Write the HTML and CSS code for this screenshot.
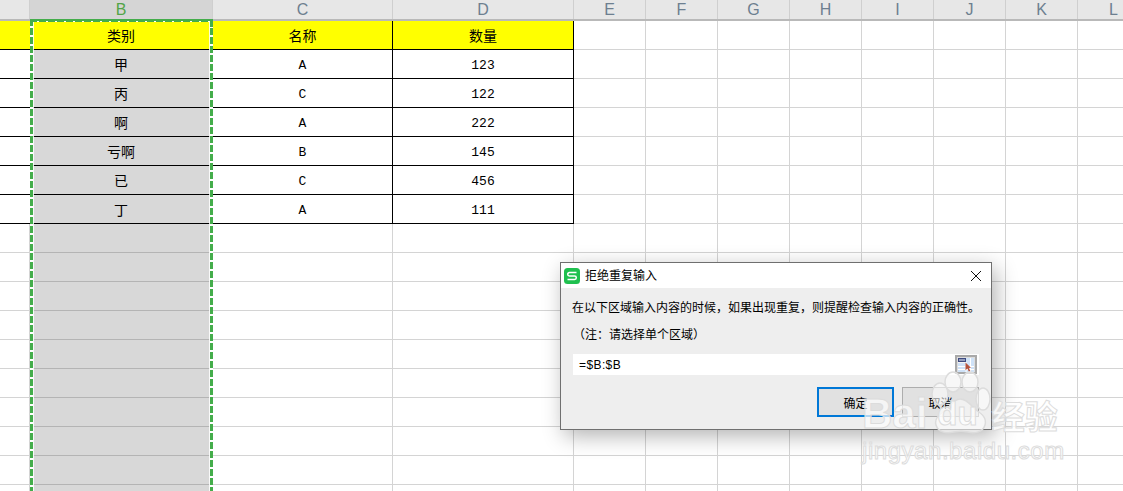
FILE: index.html
```html
<!DOCTYPE html>
<html lang="zh">
<head>
<meta charset="utf-8">
<title>拒绝重复输入</title>
<link rel="stylesheet" href="styles.css">
</head>
<body>
<div class="sheet">
  <div class="row head">
    <div class="c a"></div><div class="c b sel">B</div><div class="c cc">C</div><div class="c d">D</div>
    <div class="c e">E</div><div class="c e">F</div><div class="c e">G</div><div class="c e">H</div><div class="c e">I</div><div class="c e">J</div><div class="c e">K</div><div class="c e">L</div>
  </div>
  <div class="row data title">
    <div class="c a"></div><div class="c b">类别</div><div class="c cc">名称</div><div class="c d">数量</div>
    <div class="c e"></div><div class="c e"></div><div class="c e"></div><div class="c e"></div><div class="c e"></div><div class="c e"></div><div class="c e"></div><div class="c e"></div>
  </div>
  <div class="row data tb">
    <div class="c a"></div><div class="c b">甲</div><div class="c cc">A</div><div class="c d">123</div>
    <div class="c e"></div><div class="c e"></div><div class="c e"></div><div class="c e"></div><div class="c e"></div><div class="c e"></div><div class="c e"></div><div class="c e"></div>
  </div>
  <div class="row data tb">
    <div class="c a"></div><div class="c b">丙</div><div class="c cc">C</div><div class="c d">122</div>
    <div class="c e"></div><div class="c e"></div><div class="c e"></div><div class="c e"></div><div class="c e"></div><div class="c e"></div><div class="c e"></div><div class="c e"></div>
  </div>
  <div class="row data tb">
    <div class="c a"></div><div class="c b">啊</div><div class="c cc">A</div><div class="c d">222</div>
    <div class="c e"></div><div class="c e"></div><div class="c e"></div><div class="c e"></div><div class="c e"></div><div class="c e"></div><div class="c e"></div><div class="c e"></div>
  </div>
  <div class="row data tb">
    <div class="c a"></div><div class="c b">亏啊</div><div class="c cc">B</div><div class="c d">145</div>
    <div class="c e"></div><div class="c e"></div><div class="c e"></div><div class="c e"></div><div class="c e"></div><div class="c e"></div><div class="c e"></div><div class="c e"></div>
  </div>
  <div class="row data tb">
    <div class="c a"></div><div class="c b">已</div><div class="c cc">C</div><div class="c d">456</div>
    <div class="c e"></div><div class="c e"></div><div class="c e"></div><div class="c e"></div><div class="c e"></div><div class="c e"></div><div class="c e"></div><div class="c e"></div>
  </div>
  <div class="row data tb">
    <div class="c a"></div><div class="c b">丁</div><div class="c cc">A</div><div class="c d">111</div>
    <div class="c e"></div><div class="c e"></div><div class="c e"></div><div class="c e"></div><div class="c e"></div><div class="c e"></div><div class="c e"></div><div class="c e"></div>
  </div>
  <div class="row data empty"><div class="c a"></div><div class="c b"></div><div class="c cc"></div><div class="c d"></div><div class="c e"></div><div class="c e"></div><div class="c e"></div><div class="c e"></div><div class="c e"></div><div class="c e"></div><div class="c e"></div><div class="c e"></div></div>
  <div class="row data empty"><div class="c a"></div><div class="c b"></div><div class="c cc"></div><div class="c d"></div><div class="c e"></div><div class="c e"></div><div class="c e"></div><div class="c e"></div><div class="c e"></div><div class="c e"></div><div class="c e"></div><div class="c e"></div></div>
  <div class="row data empty"><div class="c a"></div><div class="c b"></div><div class="c cc"></div><div class="c d"></div><div class="c e"></div><div class="c e"></div><div class="c e"></div><div class="c e"></div><div class="c e"></div><div class="c e"></div><div class="c e"></div><div class="c e"></div></div>
  <div class="row data empty"><div class="c a"></div><div class="c b"></div><div class="c cc"></div><div class="c d"></div><div class="c e"></div><div class="c e"></div><div class="c e"></div><div class="c e"></div><div class="c e"></div><div class="c e"></div><div class="c e"></div><div class="c e"></div></div>
  <div class="row data empty"><div class="c a"></div><div class="c b"></div><div class="c cc"></div><div class="c d"></div><div class="c e"></div><div class="c e"></div><div class="c e"></div><div class="c e"></div><div class="c e"></div><div class="c e"></div><div class="c e"></div><div class="c e"></div></div>
  <div class="row data empty"><div class="c a"></div><div class="c b"></div><div class="c cc"></div><div class="c d"></div><div class="c e"></div><div class="c e"></div><div class="c e"></div><div class="c e"></div><div class="c e"></div><div class="c e"></div><div class="c e"></div><div class="c e"></div></div>
  <div class="row data empty"><div class="c a"></div><div class="c b"></div><div class="c cc"></div><div class="c d"></div><div class="c e"></div><div class="c e"></div><div class="c e"></div><div class="c e"></div><div class="c e"></div><div class="c e"></div><div class="c e"></div><div class="c e"></div></div>
  <div class="row data empty"><div class="c a"></div><div class="c b"></div><div class="c cc"></div><div class="c d"></div><div class="c e"></div><div class="c e"></div><div class="c e"></div><div class="c e"></div><div class="c e"></div><div class="c e"></div><div class="c e"></div><div class="c e"></div></div>
  <div class="row data empty"><div class="c a"></div><div class="c b"></div><div class="c cc"></div><div class="c d"></div><div class="c e"></div><div class="c e"></div><div class="c e"></div><div class="c e"></div><div class="c e"></div><div class="c e"></div><div class="c e"></div><div class="c e"></div></div>
  <div class="row data empty"><div class="c a"></div><div class="c b"></div><div class="c cc"></div><div class="c d"></div><div class="c e"></div><div class="c e"></div><div class="c e"></div><div class="c e"></div><div class="c e"></div><div class="c e"></div><div class="c e"></div><div class="c e"></div></div>
</div>

<div class="selection"><span class="sel-top"></span><span class="sel-corner"></span></div>

<section class="dialog">
  <header class="dlg-title">
    <svg class="app-icon" width="16" height="16" viewBox="0 0 16 16">
      <rect width="16" height="16" rx="3.5" fill="#1fc04f"/>
      <path d="M12.5 4.6H5.4a1.7 1.7 0 0 0 0 3.4h5.2a1.7 1.7 0 0 1 0 3.4H3.5" fill="none" stroke="#fff" stroke-width="1.5"/>
    </svg>
    <span class="dlg-name">拒绝重复输入</span>
    <svg class="close" width="12" height="12" viewBox="0 0 12 12"><path d="M1 1l10 10M11 1L1 11" stroke="#111" stroke-width="1" fill="none"/></svg>
  </header>
  <div class="dlg-body">
    <p class="msg">在以下区域输入内容的时候，如果出现重复，则提醒检查输入内容的正确性。</p>
    <p class="note">（注：请选择单个区域）</p>
    <div class="field">
      <span class="field-text">=$B:$B</span>
      <span class="picker">
        <svg width="16" height="14" viewBox="0 0 16 14">
          <rect width="16" height="14" fill="#cfe2f8"/>
          <rect width="8" height="4" fill="#3d4a80"/>
          <rect x="1" y="1.5" width="6" height="1" fill="#e8ecf5"/>
          <rect y="4" width="8" height="1" fill="#f4f4f4"/>
          <path d="M0 8.5h16M0 11.5h16M8 4v10M12.5 0v14" stroke="#fff" stroke-width="1"/>
          <path d="M7.5 4.5l5.5 5.2-2.2.3 1.6 3-1.5.7-1.5-3.1-1.9 1.6z" fill="#b5523c"/>
        </svg>
      </span>
    </div>
    <div class="actions">
      <button class="btn primary">确定</button>
      <button class="btn">取消</button>
    </div>
  </div>
</section>

<div class="watermark">
  <div class="wm-top">
    <span class="wm-bai">Bai</span>
    <svg class="wm-paw" width="64" height="66" viewBox="0 0 64 66">
      <g fill="#fff" fill-opacity=".55" stroke="#dcdcdc" stroke-width="1.5">
        <ellipse cx="12" cy="24" rx="8" ry="11"/>
        <ellipse cx="25" cy="12" rx="8" ry="10"/>
        <ellipse cx="42" cy="12" rx="8" ry="10"/>
        <ellipse cx="55" cy="29" rx="7" ry="11"/>
        <path d="M32 29c7 0 10 6 16 11 6 4 11 8 9 15-2 7-10 9-17 7-5-1-9-1-14 0-8 2-16 0-18-7-2-7 4-11 10-15 5-4 7-11 14-11z"/>
      </g>
    </svg>
    <span class="wm-du">du</span>
    <span class="wm-cn">经验</span>
  </div>
  <div class="wm-url">jingyan.baidu.com</div>
</div>
</body>
</html>
```
FILE: styles.css
```css
* { box-sizing: border-box; }
html, body { margin: 0; height: 100%; }
body {
  width: 1123px;
  height: 491px;
  overflow: hidden;
  position: relative;
  background: #fff;
  font-family: "Liberation Mono", "Noto Sans CJK SC", monospace;
  color: #000;
}
.sheet { display: flex; flex-direction: column; width: 1123px; }
.row { display: grid; grid-template-columns: 30px 183px 180px 181px repeat(8, 72px); flex: none; }
.c { display: flex; align-items: center; justify-content: center; min-width: 0; }

.head { height: 21px; background: #e7e7e7; border-bottom: 2px solid #b9b9b9; }
.head .c {
  font-family: "Liberation Sans", sans-serif;
  font-size: 16px;
  color: #6d7f90;
  border-right: 1px solid #cfcfcf;
}
.head .sel { background: #d5d5d5; color: #52a447; }

.data { height: 29px; font-size: 13px; }
.data .c { border-right: 1px solid #d4d4d4; border-bottom: 1px solid #d4d4d4; }
.title { font-size: 14px; font-family: "Noto Sans CJK SC", sans-serif; }
.title .a, .title .b, .title .cc, .title .d { background: #ff0; }
.title .a, .title .b, .title .cc, .title .d,
.tb .a, .tb .b, .tb .cc, .tb .d { border-bottom: 1px solid #000; }
.title .a, .tb .a { border-right: 0; }
.title .b, .title .cc, .title .d,
.tb .b, .tb .cc, .tb .d { border-right: 1px solid #000; }
.data .b { background: #d8d8d8; }
.data.title .b { background: #ff0; }
.tb .b { font-family: "Noto Sans CJK SC", sans-serif; font-size: 14px; }
.tb .cc, .tb .d { padding-top: 2px; }
.empty .b { border-bottom-color: #b4b4b4; border-right-color: #d8d8d8; }

.selection {
  position: absolute;
  left: 30px;
  top: 19px;
  width: 183px;
  height: 480px;
  box-shadow: inset 4px 0 0 rgba(255, 255, 255, .85), inset -4px 0 0 rgba(255, 255, 255, .85);
}
.selection::before, .selection::after {
  content: "";
  position: absolute;
  top: 0;
  bottom: 0;
  width: 3px;
  background: repeating-linear-gradient(180deg, #44ad4b 0 7px, #fff 7px 9px);
}
.selection::before { left: 0; }
.selection::after { right: 0; }
.sel-top {
  position: absolute;
  left: 0;
  right: 0;
  top: 0;
  height: 3px;
  background: repeating-linear-gradient(90deg, #44ad4b 0 7px, #fff 7px 9px) 0 2px / 100% 1px no-repeat, #44ad4b;
  z-index: 1;
}
.sel-corner {
  position: absolute;
  right: 0;
  top: 3px;
  width: 3px;
  height: 5px;
  background: #44ad4b;
  z-index: 1;
}

.dialog {
  position: absolute;
  left: 560px;
  top: 262px;
  width: 432px;
  height: 168px;
  background: #eee;
  border: 1px solid #6f6f6f;
  box-shadow: 4px 6px 20px rgba(0, 0, 0, .3);
  display: flex;
  flex-direction: column;
  font-family: "Noto Sans CJK SC", sans-serif;
  font-size: 12px;
}
.dlg-title {
  height: 25px;
  flex: none;
  background: #fff;
  display: flex;
  align-items: center;
  padding: 0 9px 0 3px;
  gap: 5px;
}
.dlg-name { flex: 1; line-height: 16px; padding-bottom: 2px; }
.dlg-body { flex: 1; padding: 0 12px; display: flex; flex-direction: column; }
.msg { margin: 10px 0 0 -1px; height: 18px; line-height: 18px; white-space: nowrap; }
.note { margin: 9px 0 0; height: 18px; line-height: 18px; }
.field {
  margin-top: 11px;
  height: 21px;
  background: #fff;
  display: flex;
  align-items: center;
  justify-content: space-between;
  padding: 0 2px 0 6px;
}
.field-text { font-family: "Liberation Sans", sans-serif; font-size: 12px; letter-spacing: .4px; }
.picker {
  width: 22px;
  height: 19px;
  background: #ddd;
  border: 2px solid #a9a9a9;
  display: flex;
  align-items: center;
  justify-content: center;
}
.picker svg { flex: none; }
.actions { margin-top: 12px; display: flex; justify-content: flex-end; gap: 8px; }
.btn {
  width: 77px;
  height: 30px;
  padding: 0;
  background: #e1e1e1;
  border: 1px solid #adadad;
  font: inherit;
  color: #000;
}
.primary { border: 2px solid #0078d7; }

.watermark {
  position: absolute;
  left: 862px;
  top: 372px;
  width: 210px;
  color: #fff;
  font-family: "Liberation Sans", sans-serif;
  -webkit-text-stroke: 1px #dcdcdc;
  pointer-events: none;
}
.wm-top { display: flex; align-items: flex-end; height: 68px; position: relative; }
.wm-bai { font-size: 42px; font-weight: 700; line-height: 44px; margin-bottom: 4px; color: rgba(255,255,255,.7); }
.wm-paw { position: absolute; left: 66px; top: -2px; }
.wm-du { font-size: 33px; font-weight: 700; line-height: 44px; margin-left: 10px; margin-bottom: 4px; color: rgba(255,255,255,.7); position: relative; }
.wm-cn { font-family: "Noto Sans CJK SC", sans-serif; font-size: 33px; font-weight: 700; line-height: 44px; margin-left: 14px; margin-bottom: 3px; color: rgba(255,255,255,.8); white-space: nowrap; }
.wm-url { font-size: 24px; line-height: 26px; letter-spacing: .55px; margin-top: -2px; color: rgba(255,255,255,.7); white-space: nowrap; }
```
